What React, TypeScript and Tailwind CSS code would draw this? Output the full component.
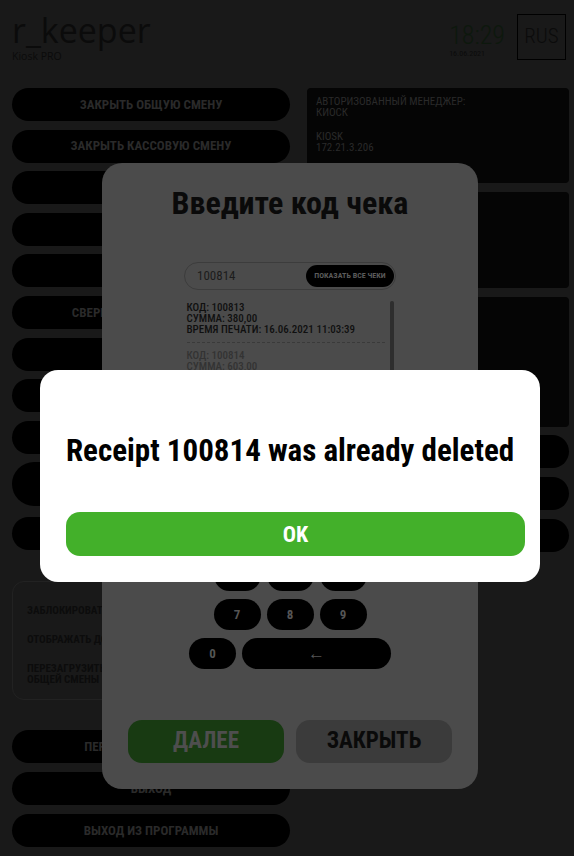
import { ReactNode } from 'react'

// labels of buttons whose text sits under the dialogs are left empty
const leftTop = [
  'ЗАКРЫТЬ ОБЩУЮ СМЕНУ',
  'ЗАКРЫТЬ КАССОВУЮ СМЕНУ',
  '',
  '',
  '',
  'СВЕРКА ИТОГОВ ПО КАРТАМ',
  '',
  '',
  '',
]

function PageButton({ children, className = '' }: { children?: ReactNode; className?: string }) {
  return (
    <div
      className={`flex h-[33px] items-center justify-center rounded-full bg-black text-[13px] font-bold text-[#2a2a2a] ${className}`}
    >
      {children}
    </div>
  )
}

function Key({ label = '', wide }: { label?: string; wide?: boolean }) {
  return (
    <div
      className={`flex h-[31px] items-center justify-center rounded-full bg-black font-bold text-[#555] ${
        wide ? 'w-[149px] text-[17px] font-normal' : 'w-[47px] text-[13px]'
      }`}
    >
      {label}
    </div>
  )
}

export default function App() {
  return (
    <div className="relative h-[856px] w-[574px] overflow-hidden bg-[#191919] font-['Roboto',sans-serif] font-stretch-condensed">
      {/* header */}
      <div className="flex h-[88px] items-start justify-between pl-[12px] pr-[8px] pt-[10px]">
        <div className="font-['Open_Sans',sans-serif] font-stretch-normal text-[#0b0b0b]">
          <div className="text-[34px] leading-[40px]">r_keeper</div>
          <div className="pt-[1px] text-[10.5px] leading-[11px]">Kiosk PRO</div>
        </div>
        <div className="flex items-start gap-[12px] pt-[4px]">
          <div className="pt-[8px]">
            <div className="text-[26px] font-light leading-[27px] text-[#0d180d]">18:29</div>
            <div className="text-[8px] leading-[9px] text-[#0b0b0b]">16.06.2021</div>
          </div>
          <div className="flex h-[46px] w-[49px] items-center justify-center border border-black text-[21px] font-light text-[#0b0b0b]">
            RUS
          </div>
        </div>
      </div>

      {/* columns */}
      <div className="flex gap-[17px] pl-[12px] pr-[5px]">
        <div className="flex w-[278px] flex-col">
          <div className="flex flex-col gap-[8.6px]">
            {leftTop.map((t, i) => (
              <PageButton key={i}>{t}</PageButton>
            ))}
            <PageButton className="h-[44px]" />
            <PageButton className="mt-[2px] bg-[#121212]" />
          </div>
          <div className="mt-[31px] flex h-[119px] flex-col gap-[18px] rounded-[12px] border border-[#222] px-[14px] pt-[23px] text-[11px] font-bold leading-[11px] text-[#0c0c0c]">
            <div>ЗАБЛОКИРОВАТЬ КИОСК</div>
            <div>ОТОБРАЖАТЬ ДОП. ИНФОРМАЦИЮ</div>
            <div>
              ПЕРЕЗАГРУЗИТЬ ПОСЛЕ ЗАКРЫТИЯ
              <br />
              ОБЩЕЙ СМЕНЫ
            </div>
          </div>
          <div className="mt-[30px] flex flex-col gap-[9px]">
            <PageButton>ПЕРЕЗАГРУЗИТЬ КИОСК</PageButton>
            <PageButton>ВЫХОД</PageButton>
            <PageButton>ВЫХОД ИЗ ПРОГРАММЫ</PageButton>
          </div>
        </div>

        <div className="flex flex-1 flex-col">
          <div className="h-[95px] rounded-[4px] bg-[#050505] px-[9px] pt-[8px] text-[11px] leading-[11px] text-[#2a2a2a]">
            <div>АВТОРИЗОВАННЫЙ МЕНЕДЖЕР:</div>
            <div>КИОСК</div>
            <div className="mt-[13px]">KIOSK</div>
            <div>172.21.3.206</div>
          </div>
          <div className="mt-[9px] h-[96px] rounded-[4px] bg-[#050505]" />
          <div className="mt-[9px] h-[130px] rounded-[4px] bg-[#050505]" />
          <div className="mt-[8px] flex flex-col gap-[9px]">
            <PageButton />
            <PageButton />
            <PageButton />
          </div>
        </div>
      </div>

      {/* receipt code dialog */}
      <div className="absolute left-[102px] top-[163px] flex h-[626px] w-[376px] flex-col items-center rounded-[20px] bg-[#4b4b4b] pt-[20px]">
        <div className="text-[32px] font-bold leading-[40px] text-[#0a0a0a]">Введите код чека</div>
        <div className="mt-[39px] flex h-[28px] w-[212px] items-center justify-between rounded-full border border-[#3c3c3c] pl-[12px] pr-[1px]">
          <span className="text-[13px] text-[#1c1c1c]">100814</span>
          <span className="flex h-[22px] w-[88px] items-center justify-center rounded-full bg-black text-[8px] font-bold text-[#5a5a5a]">
            ПОКАЗАТЬ ВСЕ ЧЕКИ
          </span>
        </div>
        <div className="mt-[11px] flex h-[210px] w-[207px] gap-[5px]">
          <div className="flex-1 pt-[1px] text-[11px] leading-[11px]">
            <div className="border-b border-dashed border-[#3a3a3a] pb-[7px] font-medium text-[#101010]">
              <div>КОД: 100813</div>
              <div>СУММА: 380,00</div>
              <div>ВРЕМЯ ПЕЧАТИ: 16.06.2021 11:03:39</div>
            </div>
            <div className="pt-[7px] font-medium text-[#333]">
              <div>КОД: 100814</div>
              <div>СУММА: 603,00</div>
            </div>
          </div>
          <div className="h-[200px] w-[4px] rounded-full bg-[#2e2e2e]" />
        </div>
        <div className="mt-[10px] flex flex-col items-center gap-[8px]">
          <div className="flex gap-[6px]">
            <Key />
            <Key />
            <Key />
          </div>
          <div className="flex gap-[6px]">
            <Key />
            <Key />
            <Key />
          </div>
          <div className="flex gap-[6px]">
            <Key label="7" />
            <Key label="8" />
            <Key label="9" />
          </div>
          <div className="flex gap-[6px]">
            <Key label="0" />
            <Key label="←" wide />
          </div>
        </div>
        <div className="mt-[51px] flex gap-[12px]">
          <div className="flex h-[43px] w-[156px] items-center justify-center rounded-[14px] bg-[#183a12] text-[23px] font-bold text-[#4e4e4e]">
            ДАЛЕЕ
          </div>
          <div className="flex h-[43px] w-[156px] items-center justify-center rounded-[14px] bg-[#3b3b3b] text-[23px] font-bold text-[#0a0a0a]">
            ЗАКРЫТЬ
          </div>
        </div>
      </div>

      {/* alert */}
      <div className="absolute left-[40px] top-[370px] flex h-[212px] w-[500px] flex-col rounded-[18px] bg-white pt-[62px]">
        <div className="self-center whitespace-nowrap text-[31px] font-bold leading-[38px] text-black">
          Receipt 100814 was already deleted
        </div>
        <div className="ml-[26px] mt-[42px] flex h-[44px] w-[459px] items-center justify-center rounded-[14px] bg-[#43b02a] text-[22px] font-bold text-white">
          OK
        </div>
      </div>
    </div>
  )
}
